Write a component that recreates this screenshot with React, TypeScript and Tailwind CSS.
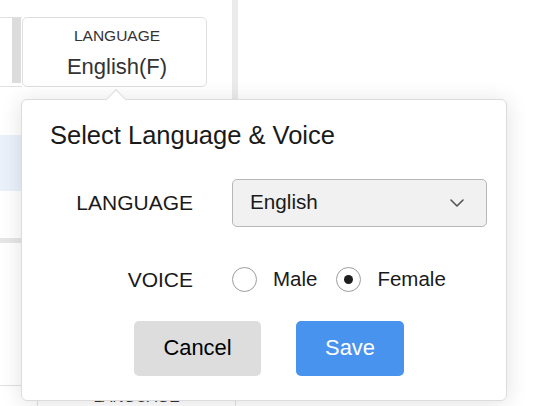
import React from 'react';

function Radio({ label, checked }: { label: string; checked?: boolean }) {
  return (
    <div className="flex items-center">
      <span className="flex h-[25px] w-[25px] items-center justify-center rounded-full border border-[#9c9c9c] bg-white">
        {checked && <span className="h-[9px] w-[9px] rounded-full bg-[#1e1e1e]" />}
      </span>
      <span className="ml-[16px] text-[20.5px] leading-none text-[#1a1a1a]">{label}</span>
    </div>
  );
}

export default function App() {
  return (
    <div className="relative h-[406px] w-[550px] overflow-hidden bg-white font-['Liberation_Sans',Arial,sans-serif]">
      {/* page behind the popover */}
      <div className="flex h-full">
        <div className="flex w-[232px] flex-col">
          <div className="h-[17px]" />
          <div className="flex h-[72px]">
            <div className="flex w-[22px] flex-col border-y border-[#e0e0e0]">
              <div className="ml-[12px] h-[65px] w-[9px] bg-[#dcdcdc]" />
            </div>
            <div className="flex w-[185px] flex-col items-center rounded-[5px] border border-[#dedede] pl-[5px] pt-[10px] text-[#333]">
              <span className="text-[15.5px] leading-none">LANGUAGE</span>
              <span className="mt-[13px] text-[22px] leading-none">English(F)</span>
            </div>
          </div>
          <div className="h-[49px]" />
          <div className="h-[58px] bg-[#eaf1fb]" />
          <div className="h-[48px]" />
          <div className="h-[5px] bg-[#e6e6e6]" />
          <div className="h-[146px]" />
          <div className="border-t border-[#e0e0e0]">
            <div className="ml-[37px] h-[20px] w-[199px] border-x border-[#e0e0e0] pt-[3px] text-center text-[15.5px] leading-none text-[#333]">
              LANGUAGE
            </div>
          </div>
        </div>
        <div className="h-[99px] w-[6px] bg-[#ebebeb]" />
        <div className="flex-1" />
      </div>

      {/* popover */}
      <div className="absolute left-[21px] top-[99px] h-[302px] w-[486px] rounded-[6px] border border-[#dcdcdc] bg-white shadow-[0_2px_22px_rgba(0,0,0,0.12)]">
        <div className="absolute left-[87px] top-[-8px] h-[14px] w-[14px] rotate-45 border-l border-t border-[#dcdcdc] bg-white" />
        <div className="relative pt-[23px]">
          <h2 className="pl-[28px] text-[25.5px] font-normal leading-none text-[#1a1a1a]">Select Language &amp; Voice</h2>
          <div className="mt-[30px] grid grid-cols-[171px_255px] items-center gap-x-[39px] gap-y-[40px]">
            <span className="text-right text-[21px] leading-none text-[#1a1a1a]">LANGUAGE</span>
            <div className="flex h-[48px] items-center justify-between rounded-[5px] border border-[#b7b7b7] bg-[#f1f1f1] pl-[17px] pr-[22px]">
              <span className="text-[20.7px] leading-none text-[#1a1a1a]">English</span>
              <svg width="14" height="8" viewBox="0 0 14 8" fill="none">
                <path d="M1 1l6 6 6-6" stroke="#555" strokeWidth="1.6" strokeLinecap="round" strokeLinejoin="round" />
              </svg>
            </div>
            <span className="text-right text-[21px] leading-none text-[#1a1a1a]">VOICE</span>
            <div className="flex h-[25px] items-center gap-[19px]">
              <Radio label="Male" />
              <Radio label="Female" checked />
            </div>
          </div>
          <div className="ml-[112px] mt-[29px] flex">
            <button className="h-[55px] w-[127px] rounded-[5px] bg-[#dddddd] text-[21.9px] leading-none text-black">Cancel</button>
            <button className="ml-[35px] h-[55px] w-[108px] rounded-[5px] bg-[#4893ee] text-[21.9px] leading-none text-white">Save</button>
          </div>
        </div>
      </div>
    </div>
  );
}
